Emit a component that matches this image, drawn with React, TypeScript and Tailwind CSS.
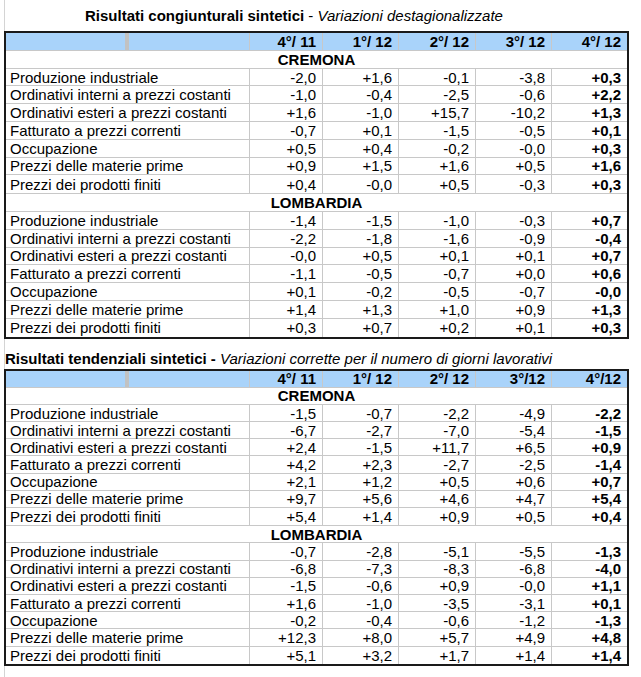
import React from 'react';

type Row = [string, string[]];

const labels = [
  'Produzione industriale',
  'Ordinativi interni a prezzi costanti',
  'Ordinativi esteri a prezzi costanti',
  'Fatturato a prezzi correnti',
  'Occupazione',
  'Prezzi delle materie prime',
  'Prezzi dei prodotti finiti',
];

const mk = (vals: string[][]): Row[] => vals.map((v, i) => [labels[i], v]);

const congCremona = mk([
  ['-2,0', '+1,6', '-0,1', '-3,8', '+0,3'],
  ['-1,0', '-0,4', '-2,5', '-0,6', '+2,2'],
  ['+1,6', '-1,0', '+15,7', '-10,2', '+1,3'],
  ['-0,7', '+0,1', '-1,5', '-0,5', '+0,1'],
  ['+0,5', '+0,4', '-0,2', '-0,0', '+0,3'],
  ['+0,9', '+1,5', '+1,6', '+0,5', '+1,6'],
  ['+0,4', '-0,0', '+0,5', '-0,3', '+0,3'],
]);

const congLombardia = mk([
  ['-1,4', '-1,5', '-1,0', '-0,3', '+0,7'],
  ['-2,2', '-1,8', '-1,6', '-0,9', '-0,4'],
  ['-0,0', '+0,5', '+0,1', '+0,1', '+0,7'],
  ['-1,1', '-0,5', '-0,7', '+0,0', '+0,6'],
  ['+0,1', '-0,2', '-0,5', '-0,7', '-0,0'],
  ['+1,4', '+1,3', '+1,0', '+0,9', '+1,3'],
  ['+0,3', '+0,7', '+0,2', '+0,1', '+0,3'],
]);

const tendCremona = mk([
  ['-1,5', '-0,7', '-2,2', '-4,9', '-2,2'],
  ['-6,7', '-2,7', '-7,0', '-5,4', '-1,5'],
  ['+2,4', '-1,5', '+11,7', '+6,5', '+0,9'],
  ['+4,2', '+2,3', '-2,7', '-2,5', '-1,4'],
  ['+2,1', '+1,2', '+0,5', '+0,6', '+0,7'],
  ['+9,7', '+5,6', '+4,6', '+4,7', '+5,4'],
  ['+5,4', '+1,4', '+0,9', '+0,5', '+0,4'],
]);

const tendLombardia = mk([
  ['-0,7', '-2,8', '-5,1', '-5,5', '-1,3'],
  ['-6,8', '-7,3', '-8,3', '-6,8', '-4,0'],
  ['-1,5', '-0,6', '+0,9', '-0,0', '+1,1'],
  ['+1,6', '-1,0', '-3,5', '-3,1', '+0,1'],
  ['-0,2', '-0,4', '-0,6', '-1,2', '-1,3'],
  ['+12,3', '+8,0', '+5,7', '+4,9', '+4,8'],
  ['+5,1', '+3,2', '+1,7', '+1,4', '+1,4'],
]);

const numW = ['w-[73px]', 'w-[76px]', 'w-[77px]', 'w-[76px]', 'w-[76px]'];

function DataTable({ heads, cremona, lombardia, tall }: { heads: string[]; cremona: Row[]; lombardia: Row[]; tall: boolean }) {
  const rowH = tall ? 'h-[17.8px]' : 'h-[17.2px]';
  const region = (name: string) => (
    <div className={`${rowH} flex items-center justify-center border-b border-[#c8c8c8] font-bold`}>{name}</div>
  );
  const body = (rows: Row[]) =>
    rows.map(([label, vals], i) => (
      <div key={label} className={`${rowH} flex ${i < rows.length - 1 ? 'border-b border-[#c8c8c8]' : ''}`}>
        <div className="w-[243px] pl-[4px] flex items-center whitespace-nowrap">{label}</div>
        {vals.map((v, j) => (
          <div key={j} className={`${numW[j]} border-l border-[#c8c8c8] flex items-center justify-end pr-[6px] ${j === 4 ? 'font-bold' : ''}`}>{v}</div>
        ))}
      </div>
    ));
  return (
    <div className="w-[625px] border-2 border-[#1a1a1a]">
      <div className={`${rowH} flex bg-[#a9d3fa] border-b border-[#c8c8c8] font-bold`}>
        <div className="w-[243px] flex">
          <div className="ml-[119px] w-[4px] h-full bg-[#c2c2c2]" />
        </div>
        {heads.map((h, j) => (
          <div key={j} className={`${numW[j]} border-l border-[#c8c8c8] flex items-center justify-end pr-[6px]`}>{h}</div>
        ))}
      </div>
      {region('CREMONA')}
      {body(cremona)}
      <div className="border-b border-[#c8c8c8]" />
      {region('LOMBARDIA')}
      {body(lombardia)}
    </div>
  );
}

export default function App() {
  return (
    <div className="w-[641px] h-[677px] bg-white overflow-hidden font-['Liberation_Sans',Arial,sans-serif] text-[15px] leading-[17px] text-black">
      <div className="ml-[4px] h-full border-l border-[#d4d4d4]">
        <div className="h-[31px] flex items-center pl-[80px] pb-[1px]">
          <span className="font-bold">Risultati congiunturali sintetici</span>
          <span className="whitespace-pre"> - </span>
          <span className="italic">Variazioni destagionalizzate</span>
        </div>
        <div className="-ml-[1px]">
          <DataTable heads={['4°/ 11', '1°/ 12', '2°/ 12', '3°/ 12', '4°/ 12']} cremona={congCremona} lombardia={congLombardia} tall />
        </div>
        <div className="h-[30px] flex items-end pb-[2px]">
          <span className="font-bold">Risultati tendenziali sintetici</span>
          <span className="whitespace-pre font-bold"> - </span>
          <span className="italic">Variazioni corrette per il numero di giorni lavorativi</span>
        </div>
        <div className="-ml-[1px]">
          <DataTable heads={['4°/ 11', '1°/ 12', '2°/ 12', '3°/12', '4°/12']} cremona={tendCremona} lombardia={tendLombardia} tall={false} />
        </div>
      </div>
    </div>
  );
}
